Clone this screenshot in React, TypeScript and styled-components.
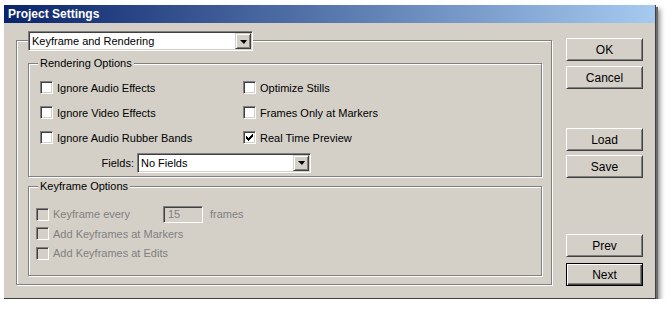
import styled, { createGlobalStyle } from 'styled-components';

const GlobalStyle = createGlobalStyle`
  html, body {
    margin: 0;
    padding: 0;
    background: #ffffff;
  }
  body {
    font-family: "Liberation Sans", Arial, sans-serif;
    font-size: 11px;
    color: #000000;
  }
`;

const FACE = '#d4d0c8';

const Window = styled.div`
  margin: 5px 0 0 4px;
  width: 652px;
  height: 294px;
  box-sizing: border-box;
  background: ${FACE};
  border-right: 1px solid #404040;
  border-bottom: 1px solid #404040;
  box-shadow: 2px 2px 0 #6b6b6b, 4px 4px 5px rgba(0, 0, 0, 0.45);
  display: flex;
  flex-direction: column;
`;

const TitleBar = styled.div`
  height: 18px;
  padding-left: 4px;
  background: linear-gradient(to right, #0a246a, #a6caf0);
  color: #ffffff;
  font-size: 12px;
  font-weight: bold;
  line-height: 18px;
`;

const Body = styled.div`
  flex: 1;
  display: flex;
  align-items: flex-start;
  padding: 17px 0 0 12px;
`;

const GroupBox = styled.div<{ $w: number; $h: number }>`
  position: relative;
  width: ${({ $w }) => $w}px;
  height: ${({ $h }) => $h}px;
  box-sizing: border-box;
  border: 1px solid #808080;
  box-shadow: 1px 1px 0 #ffffff, inset 1px 1px 0 #ffffff;
`;

const OuterContent = styled.div`
  display: flex;
  flex-direction: column;
  gap: 9px;
  padding: 22px 0 0 11px;
`;

const Caption = styled.span`
  position: absolute;
  top: -8px;
  left: 9px;
  padding: 0 2px;
  line-height: 14px;
  background: ${FACE};
`;

const CaptionSlot = styled.div`
  position: absolute;
  top: -10px;
  left: 11px;
`;

const Sunken = styled.div<{ $w: number; $h: number; $bg?: string }>`
  width: ${({ $w }) => $w}px;
  height: ${({ $h }) => $h}px;
  box-sizing: border-box;
  border: 1px solid;
  border-color: #808080 #ffffff #ffffff #808080;
  box-shadow: inset 1px 1px 0 #404040, inset -1px -1px 0 ${FACE};
  background: ${({ $bg }) => $bg || '#ffffff'};
  display: flex;
  align-items: center;
  flex-shrink: 0;
`;

const ComboText = styled.span`
  flex: 1;
  padding-left: 3px;
  line-height: 14px;
  white-space: nowrap;
`;

const DropButton = styled.div`
  width: 16px;
  height: 16px;
  margin-right: 1px;
  box-sizing: border-box;
  border: 1px solid;
  border-color: ${FACE} #404040 #404040 ${FACE};
  box-shadow: inset 1px 1px 0 #ffffff, inset -1px -1px 0 #808080;
  background: ${FACE};
  display: flex;
  align-items: center;
  justify-content: center;
`;

const Arrow = styled.span`
  width: 0;
  height: 0;
  margin-top: 1px;
  border-left: 4px solid transparent;
  border-right: 3px solid transparent;
  border-top: 4px solid #000;
`;

const CheckGrid = styled.div`
  display: grid;
  grid-template-columns: 203px 1fr;
  grid-auto-rows: 25px;
  padding: 11px 0 0 11px;
`;

const KeyRows = styled.div`
  display: grid;
  grid-template-rows: 20px 19px 20px;
  padding: 17px 0 0 7px;
`;

const Row = styled.div`
  display: flex;
  align-items: center;
`;

const FieldsRow = styled.div`
  grid-column: 1 / span 2;
  display: flex;
  align-items: center;
  gap: 3px;
`;

const FieldLabel = styled.span`
  width: 94px;
  text-align: right;
`;

const Box = styled(Sunken)`
  position: relative;
  margin-right: 4px;
`;

const Label = styled.span<{ $disabled?: boolean; $w?: number }>`
  color: ${({ $disabled }) => ($disabled ? '#808080' : '#000')};
  white-space: nowrap;
  width: ${({ $w }) => ($w ? `${$w}px` : 'auto')};
`;

const InputText = styled.span`
  padding-left: 4px;
  color: #808080;
`;

const Frames = styled.span`
  margin-left: 7px;
  color: #808080;
`;

const ButtonColumn = styled.div`
  display: flex;
  flex-direction: column;
  margin: -2px 0 0 14px;
`;

const Button = styled.div<{ $top: number; $default?: boolean }>`
  width: 77px;
  height: 23px;
  margin-top: ${({ $top }) => $top}px;
  box-sizing: border-box;
  border: 1px solid;
  border-color: ${({ $default }) => ($default ? '#000' : '#ffffff #404040 #404040 #ffffff')};
  box-shadow: ${({ $default }) =>
    $default
      ? 'inset 1px 1px 0 #ffffff, inset -1px -1px 0 #404040, inset -2px -2px 0 #808080'
      : `inset 1px 1px 0 ${FACE}, inset -1px -1px 0 #808080`};
  background: ${FACE};
  display: flex;
  align-items: center;
  justify-content: center;
  font-size: 12px;
`;

const CheckMark = () => (
  <svg width="7" height="7" viewBox="0 0 7 7" style={{ position: 'absolute', left: 2, top: 2 }}>
    <path d="M0 2h1v1h1v1h1V3h1V2h1V1h1V0h1v3H6v1H5v1H4v1H3v1H2V6H1V5H0z" fill="#000" />
  </svg>
);

const Check = ({ checked, disabled }: { checked?: boolean; disabled?: boolean }) => (
  <Box $w={13} $h={13} $bg={disabled ? FACE : '#ffffff'}>
    {checked && <CheckMark />}
  </Box>
);

const Combo = ({ text, width }: { text: string; width: number }) => (
  <Sunken $w={width} $h={20}>
    <ComboText>{text}</ComboText>
    <DropButton>
      <Arrow />
    </DropButton>
  </Sunken>
);

export default function App() {
  return (
    <>
      <GlobalStyle />
      <Window>
        <TitleBar>Project Settings</TitleBar>
        <Body>
          <GroupBox $w={536} $h={245}>
            <CaptionSlot>
              <Combo text="Keyframe and Rendering" width={225} />
            </CaptionSlot>
            <OuterContent>
              <GroupBox $w={514} $h={114}>
                <Caption>Rendering Options</Caption>
                <CheckGrid>
                  <Row>
                    <Check />
                    <Label>Ignore Audio Effects</Label>
                  </Row>
                  <Row>
                    <Check />
                    <Label>Optimize Stills</Label>
                  </Row>
                  <Row>
                    <Check />
                    <Label>Ignore Video Effects</Label>
                  </Row>
                  <Row>
                    <Check />
                    <Label>Frames Only at Markers</Label>
                  </Row>
                  <Row>
                    <Check />
                    <Label>Ignore Audio Rubber Bands</Label>
                  </Row>
                  <Row>
                    <Check checked />
                    <Label>Real Time Preview</Label>
                  </Row>
                  <FieldsRow>
                    <FieldLabel>Fields:</FieldLabel>
                    <Combo text="No Fields" width={174} />
                  </FieldsRow>
                </CheckGrid>
              </GroupBox>
              <GroupBox $w={514} $h={90}>
                <Caption>Keyframe Options</Caption>
                <KeyRows>
                  <Row>
                    <Check disabled />
                    <Label $disabled $w={110}>Keyframe every</Label>
                    <Sunken $w={40} $h={17} $bg={FACE}>
                      <InputText>15</InputText>
                    </Sunken>
                    <Frames>frames</Frames>
                  </Row>
                  <Row>
                    <Check disabled />
                    <Label $disabled>Add Keyframes at Markers</Label>
                  </Row>
                  <Row>
                    <Check disabled />
                    <Label $disabled>Add Keyframes at Edits</Label>
                  </Row>
                </KeyRows>
              </GroupBox>
            </OuterContent>
          </GroupBox>
          <ButtonColumn>
            <Button $top={0}>OK</Button>
            <Button $top={5}>Cancel</Button>
            <Button $top={39}>Load</Button>
            <Button $top={4}>Save</Button>
            <Button $top={56}>Prev</Button>
            <Button $top={6} $default>Next</Button>
          </ButtonColumn>
        </Body>
      </Window>
    </>
  );
}
